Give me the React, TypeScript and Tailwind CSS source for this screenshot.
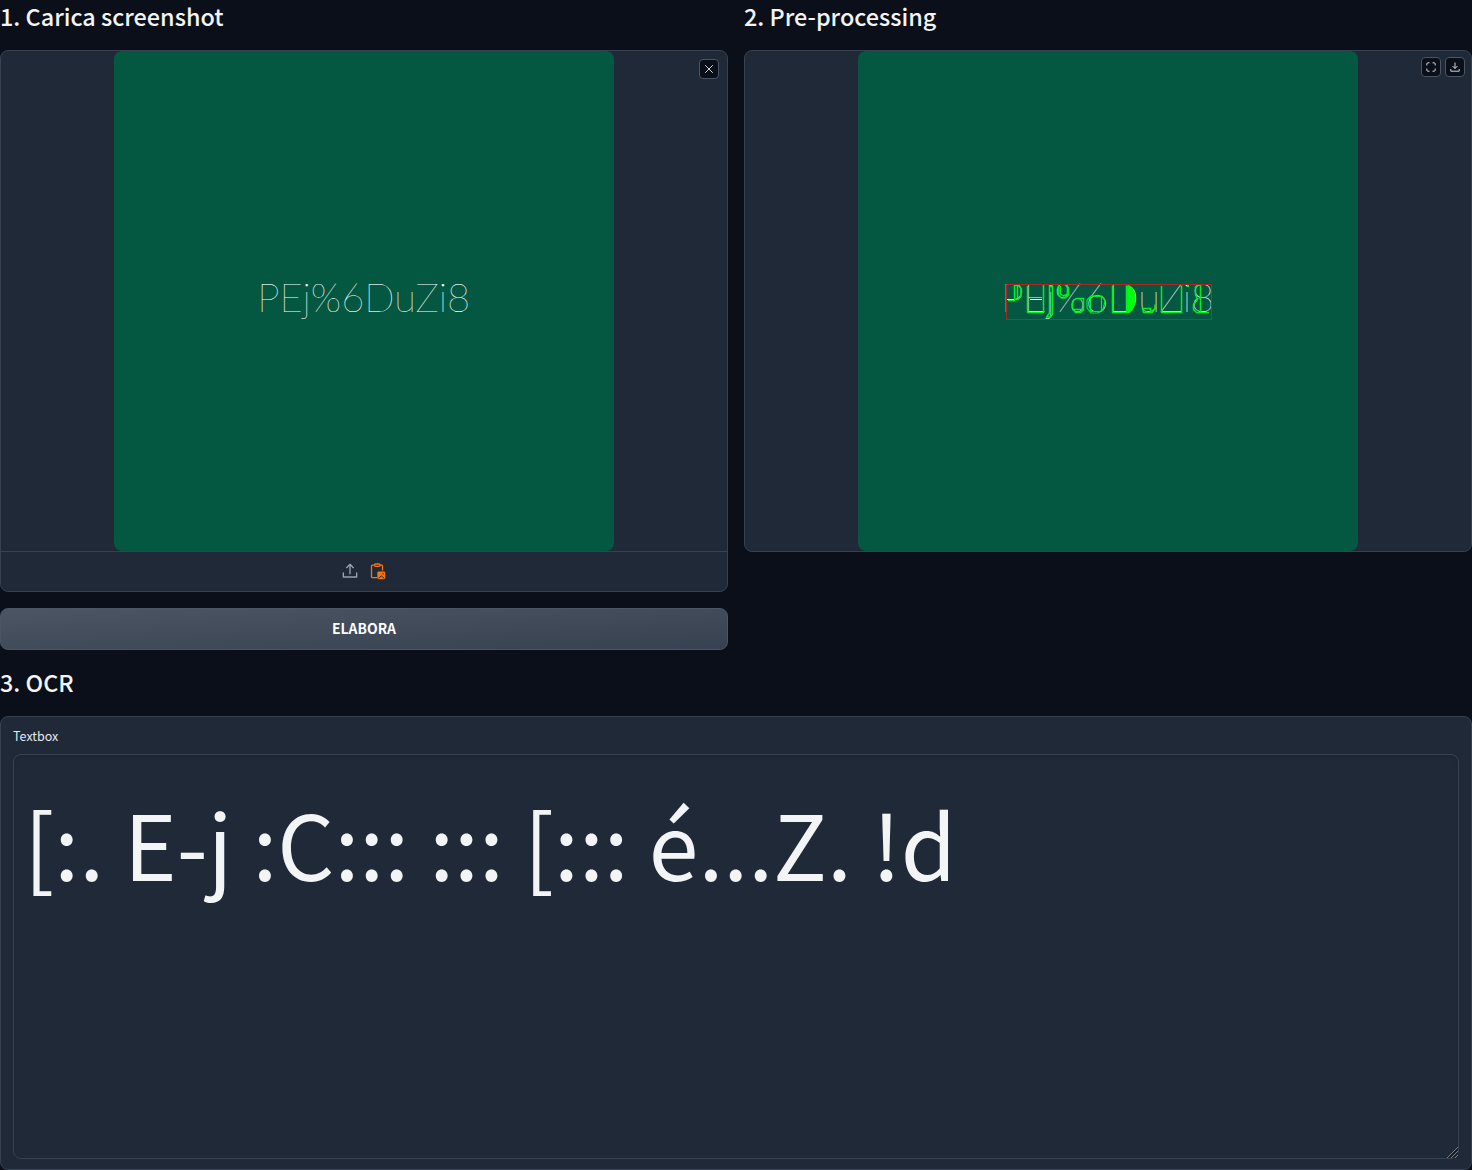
import { useState, type ReactNode } from "react";

const CAPTCHA = "PEj%6DuZi8";

function Heading({ children }: { children: ReactNode }) {
  return (
    <h2 className="flex h-[34px] items-start text-[23.4px] font-[500] leading-[32px] text-[#f3f4f6]">
      {children}
    </h2>
  );
}

function CaptchaText() {
  return (
    <text
      x="143.2"
      y="261"
      fill="#ffffff"
      stroke="#ffffff"
      strokeWidth=".1"
      fontSize="39.9"
      fontWeight="100"
      fontFamily="Lato, sans-serif"
    >
      {CAPTCHA}
    </text>
  );
}

function Picture({ children }: { children?: ReactNode }) {
  return (
    <svg width="500" height="500" viewBox="0 0 500 500" className="block rounded-lg bg-[#045741]">
      <CaptchaText />
      {children}
    </svg>
  );
}

function Detections() {
  return (
    <g fill="none" strokeLinejoin="round">
      <g stroke="#00f020" strokeWidth="1.500">
        <path d="M156.500 234.500H161l2 3v8l-3 3h-3.500zM159.500 235v12M150 249.500h7" />
        <path d="M169.500 235v26.500H185.500V234" />
        <path d="M191.500 235v27l-3 4h4l2-3V235zM191.500 235.500h3" />
        <path d="M200.500 235v9l3 3h4l3-3v-7l-2-3M202.500 235v8l3 2 4-2v-8" />
        <path d="M215.500 249.500l3-2h7v12l-3 2h-5l-3-4v-5zM214.500 258.500h11" />
        <path d="M232.500 245.500h11v15h-11zM229 249l4-4h11l3 5-2 9-5 3h-7l-4-5z" strokeWidth="1.200" />
        <path d="M254.500 235v26.500h14v-27M269.500 235v27M271.500 235v27" />
        <path d="M284.500 257.500h8v4h-7zM286 261.500h8l3-4v-4" />
        <path d="M303.500 235v26.500h20v-27" />
        <path d="M337.500 236l2-2h3v27.500h-4l-3-3v-5l4-5-2-5zM343 261.500h8" />
      </g>
      <path d="M270 235l4 1 3 6v12l-3 6-4 2z" fill="#00ff10" />
      <path d="M329 235h2" stroke="#00ff10" strokeWidth="2" />
      <path d="M148 248.500h8M172 248.500h12" stroke="#e9fff0" />
      <path d="M171 260.500h14M256 260.500h12M305 260.500h18" stroke="#86f5a0" />
      <rect x="148.500" y="233.500" width="205" height="35" stroke="#a92822" />
    </g>
  );
}

function IconButton({ label, children }: { label: string; children: ReactNode }) {
  return (
    <button
      aria-label={label}
      className="flex size-5 items-center justify-center rounded-[4px] border border-[#4b5563] bg-[#0b0f19] text-[#d1d5db]"
    >
      {children}
    </button>
  );
}

function UploadIcon() {
  return (
    <svg width="16" height="16" viewBox="0 0 24 24" fill="none" stroke="#9ca3af" strokeWidth="2" strokeLinecap="round" strokeLinejoin="round">
      <path d="M2 15v6h20v-6M12 16V2M7 7l5-5 5 5" />
    </svg>
  );
}

function PasteIcon() {
  return (
    <svg width="16" height="18" viewBox="0 0 16 18" fill="none" stroke="#f97316" strokeWidth="1.300">
      <path d="M4.500 3.200H2.300a.8.8 0 0 0-.8.8v10.900a.8.8 0 0 0 .8.8h4.700M10 3.200h1.700a.8.8 0 0 1 .8.8V8.500" />
      <rect x="4.500" y="2" width="5.500" height="2.300" rx="1" />
      <rect x="7.300" y="9.400" width="8" height="7.800" rx="1.400" fill="#f97316" stroke="none" />
      <path d="M8.800 16.400l2.500-2.600 2.900 2.600" stroke="#1f2937" strokeWidth="1" />
      <circle cx="13" cy="11.800" r=".7" fill="#1f2937" stroke="none" />
    </svg>
  );
}

export default function App() {
  const [text, setText] = useState("[:. E-j :C::: ::: [::: é...Z. !d");
  return (
    <main className="flex h-[1170px] w-[1472px] flex-col overflow-hidden bg-[#0b0f19] font-['Noto_Sans_CJK_SC',sans-serif] text-[#f3f4f6]">
      <div className="grid grid-cols-2 gap-4">
        <section>
          <Heading>1. Carica screenshot</Heading>
          <div className="relative mt-4 h-[542px] overflow-hidden rounded-lg border border-[#374151] bg-[#1f2937]">
            <div className="flex justify-center">
              <Picture />
            </div>
            <div className="flex h-10 items-center justify-center gap-3 border-t border-[#374151] pb-px">
              <UploadIcon />
              <PasteIcon />
            </div>
            <div className="absolute right-2 top-2">
              <IconButton label="Clear">
                <svg width="10" height="10" viewBox="0 0 10 10" stroke="currentColor" strokeWidth="1">
                  <path d="M1.200 1.200l7.600 7.600M8.800 1.200L1.200 8.800" />
                </svg>
              </IconButton>
            </div>
          </div>
          <button className="mt-4 flex h-[42px] w-full items-center justify-center rounded-lg border border-[#4b5563] bg-linear-to-br from-[#4b5563] to-[#374151] pb-0.5 text-[13.900px] font-bold text-white">
            ELABORA
          </button>
        </section>
        <section>
          <Heading>2. Pre-processing</Heading>
          <div className="relative mt-4 h-[502px] overflow-hidden rounded-lg border border-[#374151] bg-[#1f2937]">
            <div className="flex justify-center">
              <Picture>
                <Detections />
              </Picture>
            </div>
            <div className="absolute right-1.5 top-1.5 flex gap-1">
              <IconButton label="Fullscreen">
                <svg width="10" height="10" viewBox="0 0 10 10" fill="none" stroke="currentColor" strokeWidth="1">
                  <path d="M3.500 .8H2A1.200 1.200 0 0 0 .8 2v1.500M6.500 .8H8A1.200 1.200 0 0 1 9.200 2v1.500M.8 6.500V8A1.200 1.200 0 0 0 2 9.200h1.500M9.200 6.500V8A1.200 1.200 0 0 1 8 9.200H6.500" />
                </svg>
              </IconButton>
              <IconButton label="Download">
                <svg width="10" height="10" viewBox="0 0 10 10" fill="none" stroke="currentColor" strokeWidth="1">
                  <path d="M5 .5v6M2.500 4L5 6.500 7.500 4M.8 7v2.200h8.400V7" />
                </svg>
              </IconButton>
            </div>
          </div>
        </section>
      </div>
      <section className="mt-4">
        <Heading>3. OCR</Heading>
        <div className="relative mt-4 h-[454px] rounded-lg border border-[#374151] bg-[#1f2937] px-3 pt-[9px]">
          <label className="block h-7 text-[12.500px] leading-5 text-[#e5e7eb]">Textbox</label>
          <textarea
            value={text}
            onChange={(e) => setText(e.target.value)}
            className="block h-[405px] w-full resize-none overflow-hidden rounded-lg border border-[#374151] bg-[#1f2937] px-2.5 py-3 text-[89.500px] leading-[150px] text-[#f3f4f6] shadow-[inset_0_2px_4px_rgba(0,0,0,0.05)]"
          />
          <svg className="pointer-events-none absolute bottom-[11px] right-[13px]" width="11" height="11" viewBox="0 0 11 11" fill="none">
            <path d="M0 11L11 0M4 11l7-7M8 11l3-3" stroke="#8b9098" strokeWidth=".8" />
            <path d="M2 11l9-9M6 11l5-5" stroke="#0b0f19" strokeWidth=".8" />
          </svg>
        </div>
      </section>
    </main>
  );
}
